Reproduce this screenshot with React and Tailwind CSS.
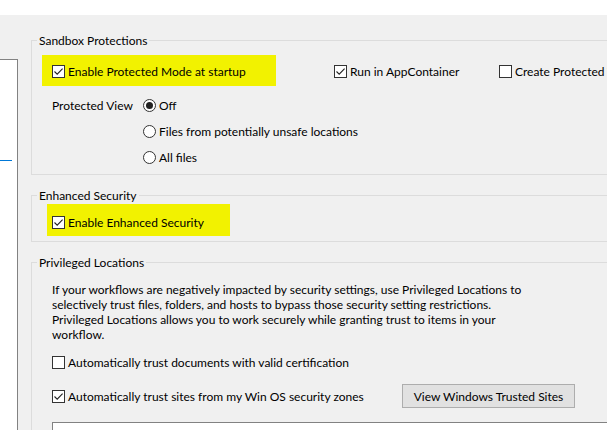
import React from "react";

const Check = ({ checked }) => (
  <span className="w-[13px] h-[13px] shrink-0 border border-[#333333] bg-white flex items-center justify-center">
    {checked && (
      <svg width="11" height="11" viewBox="0 0 11 11">
        <path d="M1.5 5.5 L4.2 8.2 L9.6 2.6" fill="none" stroke="#222222" strokeWidth="1.1" />
      </svg>
    )}
  </span>
);

const Radio = ({ checked }) => (
  <span className="w-[13px] h-[13px] shrink-0 rounded-full border border-[#333333] bg-white flex items-center justify-center">
    {checked && <span className="w-[7px] h-[7px] rounded-full bg-[#222222]" />}
  </span>
);

const CheckRow = ({ checked, children, className = "" }) => (
  <div className={"flex items-center gap-[3px] whitespace-nowrap " + className}>
    <Check checked={checked} />
    <span>{children}</span>
  </div>
);

const RadioRow = ({ checked, children }) => (
  <div className="flex items-center gap-[3px] h-[26px] whitespace-nowrap">
    <Radio checked={checked} />
    <span>{children}</span>
  </div>
);

const Group = ({ title, className = "", children }) => (
  <fieldset className={"border border-[#dcdcdc] " + className}>
    <legend className="ml-[5px] px-[2px] leading-[15px]">{title}</legend>
    {children}
  </fieldset>
);

export default function App() {
  return (
    <div className="w-[607px] h-[430px] overflow-hidden bg-[#f0f0f0] text-[12px] leading-[15px] text-black font-['Lato',sans-serif]">
      <div className="h-[15px] bg-white" />
      <div className="flex">
        <div className="w-[18px] h-[400px] shrink-0 mt-[44px] bg-white border-t border-r border-[#828282]">
          <div className="mt-[100px] w-[12px] h-px bg-[#0078d7]" />
        </div>
        <div className="ml-[13px] w-[700px] shrink-0 flex flex-col">
          <Group title="Sandbox Protections" className="mt-[18px] pt-[7px] pb-[4px]">
            <div className="flex items-center">
              <div className="ml-[10px] w-[234px] h-[31px] bg-[#f2f200] flex items-center pl-[10px] pt-[2px]">
                <CheckRow checked>Enable Protected Mode at startup</CheckRow>
              </div>
              <CheckRow checked className="ml-[58px] w-[165px] pt-[2px]">Run in AppContainer</CheckRow>
              <CheckRow className="pt-[2px]">Create Protected View</CheckRow>
            </div>
            <div className="flex mt-[6px] ml-[20px]">
              <div className="w-[91px] h-[26px] flex items-center">Protected View</div>
              <div className="flex flex-col">
                <RadioRow checked>Off</RadioRow>
                <RadioRow>Files from potentially unsafe locations</RadioRow>
                <RadioRow>All files</RadioRow>
              </div>
            </div>
          </Group>

          <Group title="Enhanced Security" className="mt-[13px] pt-[1px] pb-[5px]">
            <div className="ml-[15px] w-[183px] h-[32px] bg-[#f2f200] flex items-center pl-[5px] pt-[4px]">
              <CheckRow checked>Enable Enhanced Security</CheckRow>
            </div>
          </Group>

          <Group title="Privileged Locations" className="mt-[13px] border-b-0 pb-[20px]">
            <div className="ml-[20px] mt-[12px] whitespace-nowrap">
              <div>If your workflows are negatively impacted by security settings, use Privileged Locations to</div>
              <div>selectively trust files, folders, and hosts to bypass those security setting restrictions.</div>
              <div>Privileged Locations allows you to work securely while granting trust to items in your</div>
              <div>workflow.</div>
            </div>
            <CheckRow className="ml-[20px] mt-[10px] h-[20px]">Automatically trust documents with valid certification</CheckRow>
            <div className="ml-[20px] mt-[12px] flex items-center h-[24px]">
              <CheckRow checked className="w-[350px]">Automatically trust sites from my Win OS security zones</CheckRow>
              <button className="w-[173px] h-[24px] bg-[#e1e1e1] border border-[#adadad] flex items-center justify-center">
                View Windows Trusted Sites
              </button>
            </div>
            <div className="ml-[20px] mt-[14px] h-[60px] bg-white border border-[#828282]" />
          </Group>
        </div>
      </div>
    </div>
  );
}
